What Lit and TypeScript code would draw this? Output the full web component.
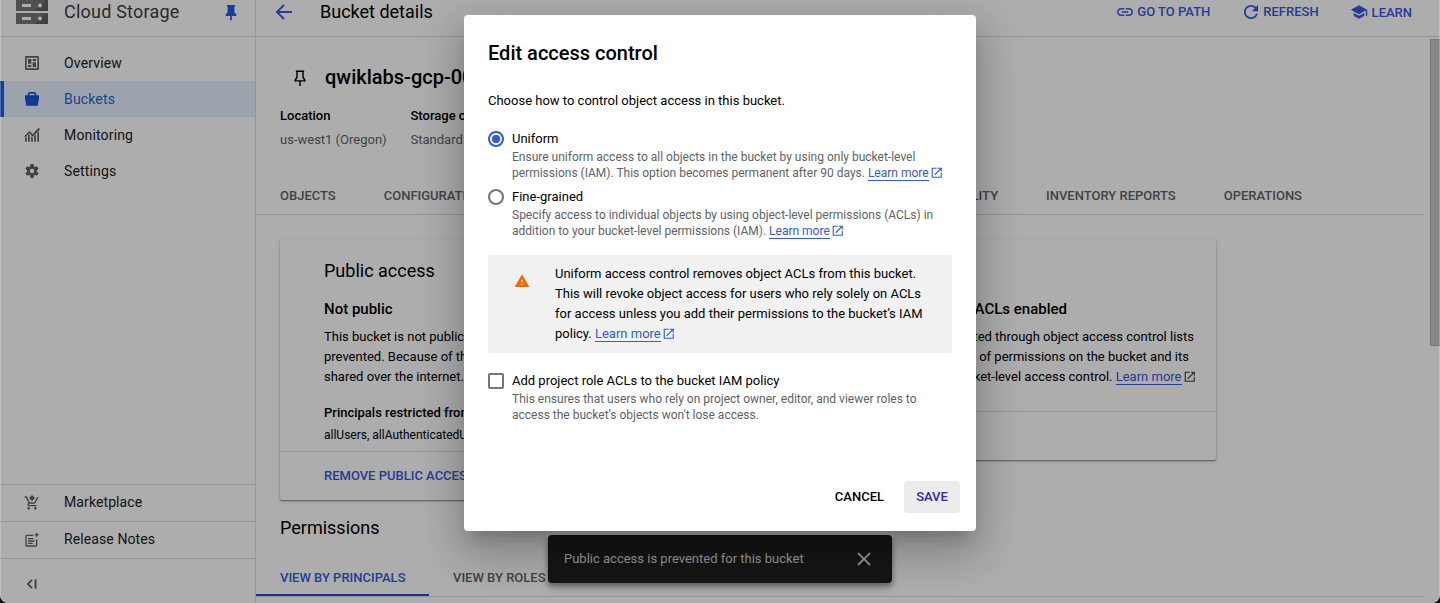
import { LitElement, html, css, svg } from "lit";
import { customElement, property } from "lit/decorators.js";

const icons: Record<string, unknown> = {
  back: svg`<path d="M21.500 10.900H6.300l6.500-6.500L11.200 2.800 2 12l9.200 9.200 1.600-1.600-6.500-6.500h15.200z"/>`,
  pinFilled: svg`<path d="M6.500 2.500h11v2h-1v8l2.600 2v2.700h-6V23h-2.200v-5.800H4.900v-2.700l2.600-2v-8h-1z"/>`,
  pin: svg`<path fill="none" stroke="currentColor" stroke-width="1.900" d="M6.500 3h11M8 3v8l-2.500 4v.8h13V15L16 11V3M12 16v6.500"/>`,
  link: svg`<path transform="translate(-.84 -.84) scale(1.07)" d="M3.9 12c0-1.71 1.39-3.1 3.1-3.1h4V7H7c-2.76 0-5 2.24-5 5s2.24 5 5 5h4v-1.9H7c-1.71 0-3.1-1.39-3.1-3.1zM8 13h8v-2H8v2zm9-6h-4v1.9h4c1.71 0 3.1 1.39 3.1 3.1s-1.39 3.1-3.1 3.1h-4V17h4c2.76 0 5-2.24 5-5s-2.24-5-5-5z"/>`,
  refresh: svg`<path transform="translate(-2 -2) scale(1.17)" d="M17.65 6.35C16.2 4.9 14.21 4 12 4c-4.42 0-7.99 3.58-7.99 8s3.57 8 7.99 8c3.73 0 6.84-2.55 7.73-6h-2.08c-.82 2.33-3.04 4-5.65 4-3.31 0-6-2.69-6-6s2.69-6 6-6c1.66 0 3.14.69 4.22 1.78L13 11h7V4l-2.35 2.35z"/>`,
  learn: svg`<path d="M5 13.18v4L12 21l7-3.82v-4L12 17l-7-3.82zM12 3L1 9l11 6 9-4.91V17h2V9L12 3z"/>`,
  overview: svg`<path fill-rule="evenodd" d="M3.500 1.500h17a2 2 0 0 1 2 2v17a2 2 0 0 1-2 2h-17a2 2 0 0 1-2-2v-17a2 2 0 0 1 2-2zm.5 2.500v16h16V4zM6 6h5v7H6zM13 6h5v3h-5zM13 11h5v7h-5zM6 15h5v3H6z"/>`,
  bucket: svg`<path fill-rule="evenodd" d="M7 1.500h10l2 5h3.500v4L20.500 22h-17L1.500 10.500v-4H5zM8.500 4L7.500 6.500h9L15.500 4z"/>`,
  monitoring: svg`<path d="M1.500 22v-5l2.600-2.500V22zM6 22v-9.500l1.500-1.500 1.100 1V22zM10.700 22v-8l2.600 2v6zM15.200 22v-8.500l2.600-2.500v11zM19.900 22V9l2.600-2.500V22zM1 13l7-7 5 5L22 1l1.500 1.600v1.600L13 14.500l-5-5-7 7z"/>`,
  settings: svg`<path d="M19.400 13a7.500 7.500 0 0 0 0-2l2.600-2-2.500-4.300-3 1.200a7.500 7.500 0 0 0-1.700-1L14.300 1.500H9.700L9.200 4.900a7.500 7.500 0 0 0-1.700 1l-3-1.200L2 9l2.600 2a7.500 7.500 0 0 0 0 2L2 15l2.500 4.300 3-1.200a7.500 7.500 0 0 0 1.700 1l.5 3.400h4.600l.5-3.400a7.500 7.500 0 0 0 1.700-1l3 1.200L22 15zM12 15.300a3.300 3.300 0 1 1 0-6.600 3.300 3.300 0 0 1 0 6.600z"/>`,
  market: svg`<path d="M12 0l4.500 4.500L12 9 7.500 4.500zM7 18c-1.100 0-2 .9-2 2s.9 2 2 2 2-.9 2-2-.9-2-2-2zm10 0c-1.100 0-2 .9-2 2s.9 2 2 2 2-.9 2-2-.9-2-2-2zM8.100 13h7.450c.75 0 1.410-.41 1.750-1.030L21.700 4l-1.750-1-4.400 8H8.530L4.270 2H1v2h2l3.600 7.590-1.350 2.440C4.520 15.370 5.480 17 7 17h12v-2H7l1.100-2z"/>`,
  notes: svg`<path d="M14 4H4a2 2 0 0 0-2 2v14a2 2 0 0 0 2 2h14a2 2 0 0 0 2-2V11h-2v9H4V6h10zM6 9h8v2H6zM6 12.500h10v2H6zM6 16h7v2H6zM19 0l1.200 3L23 4.200l-2.800 1.200L19 8.500l-1.200-3.100L15 4.200 17.800 3z"/>`,
  collapse: svg`<path d="M12.500 5L5.500 12l7 7 1.900-1.900L9.300 12l5.100-5.100zM17.500 5h2.800v14h-2.800z"/>`,
  external: svg`<path d="M19 19H5V5h7V3H3v18h18v-9h-2v7zM14 3v2h3.590l-9.830 9.830 1.410 1.410L19 6.410V10h2V3h-7z"/>`,
  close: svg`<path d="M20 5.600L18.400 4 12 10.400 5.600 4 4 5.600l6.400 6.400L4 18.400 5.600 20l6.400-6.400 6.400 6.400 1.600-1.600-6.400-6.400z"/>`,
  warning: svg`<path d="M1 21h22L12 2 1 21zm12-3h-2v-2h2v2zm0-4h-2v-4h2v4z"/>`,
};

@customElement("ui-icon")
class UiIcon extends LitElement {
  @property() name = "";
  static styles = css`
    :host { display: inline-flex; flex: none; width: 18px; height: 18px; }
    svg { display: block; width: 100%; height: 100%; fill: currentColor; }
  `;
  render() {
    return html`<svg viewBox="0 0 24 24">${icons[this.name]}</svg>`;
  }
}

@customElement("learn-link")
class LearnLink extends LitElement {
  static styles = css`
    :host { color: #3659de; white-space: nowrap; }
    .text { border-bottom: 1px solid currentColor; }
    ui-icon { width: 13.500px; height: 13.500px; margin: 0 0 0 1px; vertical-align: -2px; color: var(--ext, currentColor); }
  `;
  render() {
    return html`<span class="text">Learn more</span><ui-icon name="external"></ui-icon>`;
  }
}

@customElement("app-root")
class AppRoot extends LitElement {
  static styles = css`
    :host {
      display: block; width: 1440px; height: 603px; overflow: hidden;
      background: #0c1014; color: #000;
      font: 400 13px/20px Roboto, sans-serif; letter-spacing: 0;
    }
    * { box-sizing: border-box; }
    .window { position: relative; height: 603px; overflow: hidden; border-radius: 0 0 8px 8px; background: #fff; }
    .page { display: flex; height: 603px; }
    .side { width: 256px; flex: none; border-right: 1px solid #dadce0; display: flex; flex-direction: column; color: #202124; }
    .product { height: 49px; margin-top: -12px; flex: none; display: flex; align-items: center; padding: 0 15px 0 16px; border-bottom: 1px solid #dadce0; }
    .racks { width: 32px; display: grid; gap: 2px; }
    .racks svg { display: block; }
    .product .name { margin-left: 16px; flex: 1; font-size: 18px; letter-spacing: 0.22px; color: #3c4043; }
    .product ui-icon { color: #1a5fe0; width: 18px; height: 18px; }
    .nav { padding-top: 8px; flex: 1; }
    .item { display: flex; align-items: center; height: 36px; padding-left: 24px; font-size: 14px; letter-spacing: 0.16px; }
    .item ui-icon { width: 16px; height: 16px; margin-right: 24px; color: #5f6368; }
    .item.active { background: #e8f0fe; color: #1967d2; border-left: 4px solid #1a5fe0; padding-left: 20px; }
    .item.active ui-icon { color: #1558d6; }
    .foot { border-top: 1px solid #dadce0; height: 37px; padding-bottom: 2px; letter-spacing: 0.1px; }
    .foot ui-icon { margin-top: 2px; }
    .fold { height: 45px; border-top: 1px solid #dadce0; padding: 17px 0 0 23px; color: #5f6368; }
    .fold ui-icon { width: 16px; height: 16px; }
    .main { flex: 1; min-width: 0; display: flex; flex-direction: column; }
    .bar { height: 49px; margin-top: -12px; flex: none; display: flex; align-items: center; padding: 0 28px 0 18px; border-bottom: 1px solid #dadce0; color: #3659de; font-weight: 500; }
    .bar .back { width: 20px; height: 20px; }
    .bar .title { margin-left: 26px; flex: 1; font-size: 18px; font-weight: 400; color: #000; }
    .action { display: flex; align-items: center; gap: 3px; margin-left: 32px; }
    .action.last { padding-top: 1px; margin-left: 31px; gap: 4px; }
    .action.last ui-icon { margin-bottom: 2px; }
    .scroll { display: flex; flex: 1; min-height: 0; }
    .body { width: 1168px; flex: none; white-space: nowrap; overflow: hidden; }
    .thumb { width: 10px; height: 307px; margin: 2px 0 0 6px; background: #c6c6c6; border: 1px solid #b4b4b4; border-right: 0; }
    .head { display: flex; align-items: center; height: 24px; margin: 28px 0 0 35px; font-size: 20px; font-weight: 500; }
    .head ui-icon { margin: 2px 16px 0 0; }
    .facts { display: grid; grid-template-columns: 106.500px auto; column-gap: 24px; row-gap: 4px; margin: 17px 24px 0; }
    .facts b { font-weight: 500; }
    .facts span { color: #5f6368; }
    .tabs { display: flex; font-weight: 500; color: #5f6368; border-bottom: 1px solid #dadce0; }
    .tabs span { padding: 0 24px; }
    .tabs.top { height: 38px; line-height: 37px; margin-top: 27px; padding-right: 98px; }
    .tabs .gap { flex: 1; }
    .cards { display: flex; align-items: flex-start; gap: 24px; padding: 24px 24px 0; }
    .card { width: 456px; border-radius: 2px; box-shadow: 0 1px 3px rgba(0,0,0,.28), 0 1px 1px rgba(0,0,0,.3); }
    .content { padding: 22px 44px 0; height: 212px; overflow: hidden; }
    .content.short { height: 172px; padding: 42px 20px 0; }
    .content h2 { margin: 0; font-size: 18px; line-height: 20px; font-weight: 400; }
    .content h3 { margin: 18px 0 8px; font-size: 15px; line-height: 20px; font-weight: 500; }
    .content h4 { margin: 16px 0 2px; font-size: 13px; line-height: 20px; font-weight: 500; }
    .content .small { font-size: 12px; }
    .right { display: flex; flex-direction: column; align-items: flex-end; --ext: #3c4043; }
    .right .r1 { padding-right: 2px; }
    .right .r2 { padding-right: 7px; }
    .right .h { padding-right: 129px; }
    .cardfoot { height: 49px; border-top: 1px solid #dadce0; padding: 14px 44px; color: #3659de; font-weight: 500; }
    .perm { margin: 18px 24px 0; font-size: 18px; line-height: 20px; }
    .tabs.view { margin-top: 22px; height: 37px; line-height: 36px; }
    .tabs.view span:first-child { padding-right: 23.500px; }
    .tabs .on { color: #3659de; border-bottom: 2px solid #2c4fd8; height: 36px; }
    .snack { position: absolute; left: 548px; top: 535px; width: 344px; height: 48px; border-radius: 4px; background: #202020; color: #dcdcdc; display: flex; align-items: center; justify-content: space-between; padding: 0 18px 0 16px; box-shadow: 0 3px 5px rgba(0,0,0,.3), 0 5px 10px rgba(0,0,0,.2); }
    .snack ui-icon { width: 20px; height: 20px; }
    .shade { position: absolute; inset: 0; background: rgba(0,0,0,.32); border: solid rgba(255,255,255,.25); border-width: 0 1px; display: flex; justify-content: center; align-items: flex-start; padding-top: 15px; }
    .dialog { width: 512px; height: 516px; border-radius: 4px; background: #fff; padding: 26px 24px 0; box-shadow: 0 11px 15px -7px rgba(0,0,0,.2), 0 24px 38px 3px rgba(0,0,0,.14), 0 9px 46px 8px rgba(0,0,0,.12); white-space: nowrap; }
    .dialog h1 { margin: 0 0 26px; font-size: 20px; line-height: 24px; font-weight: 500; }
    .choice { display: flex; gap: 8px; }
    .choice .hint { font-size: 12px; line-height: 16px; color: #5f6368; }
    .choice.a { margin-top: 18px; }
    .choice.b { margin-top: 6px; }
    .choice.c { margin-top: 18px; }
    .radio, .check { width: 16px; height: 16px; flex: none; margin-top: 2px; border: 2px solid #757575; border-radius: 50%; }
    .check { border-radius: 2px; }
    .radio.on { border-color: #3659de; background: radial-gradient(circle, #3659de 3.800px, #fff 4.500px); }
    .warn { margin-top: 16px; height: 98px; background: #f1f1f1; border-radius: 4px; display: flex; padding: 9px 0 0 26px; }
    .warn ui-icon.tri { width: 16px; height: 16px; margin: 9px 25px 0 0; color: #ee6a02; }
    .btns { display: flex; justify-content: flex-end; gap: 8px; margin: 58px -8px 0 0; font-weight: 500; }
    .btn { height: 32px; line-height: 32px; min-width: 56px; text-align: center; padding: 0 12px; border-radius: 4px; }
    .btn.save { background: #ececec; color: #2b27bd; }
  `;

  private nav = [
    ["overview", "Overview"],
    ["bucket", "Buckets"],
    ["monitoring", "Monitoring"],
    ["settings", "Settings"],
  ];

  private rack() {
    return html`<svg width="32" height="11" viewBox="0 0 32 11"><path fill="#757575" d="M0 0h32v11H0z"/><path fill="#616161" d="M30 0h2v11H19z"/><path fill="#fff" d="M6 4h9v3H6z"/><circle cx="24" cy="5.500" r="2" fill="#fff"/></svg>`;
  }

  render() {
    return html`<div class="window">
      <div class="page">
        <nav class="side">
          <div class="product">
            <div class="racks">${this.rack()}${this.rack()}</div>
            <span class="name">Cloud Storage</span><ui-icon name="pinFilled"></ui-icon>
          </div>
          <div class="nav">
            ${this.nav.map(([icon, label]) => html`<div class="item ${label === "Buckets" ? "active" : ""}"><ui-icon name=${icon}></ui-icon>${label}</div>`)}
          </div>
          <div class="item foot"><ui-icon name="market"></ui-icon>Marketplace</div>
          <div class="item foot"><ui-icon name="notes"></ui-icon>Release Notes</div>
          <div class="fold"><ui-icon name="collapse"></ui-icon></div>
        </nav>
        <main class="main">
          <div class="bar">
            <ui-icon class="back" name="back"></ui-icon><span class="title">Bucket details</span>
            <span class="action"><ui-icon name="link"></ui-icon>GO TO PATH</span>
            <span class="action"><ui-icon name="refresh"></ui-icon>REFRESH</span>
            <span class="action last"><ui-icon name="learn"></ui-icon>LEARN</span>
          </div>
          <div class="scroll">
            <div class="body">
              <div class="head"><ui-icon name="pin"></ui-icon>qwiklabs-gcp-00</div>
              <div class="facts"><b>Location</b><b>Storage class</b><span>us-west1 (Oregon)</span><span>Standard</span></div>
              <div class="tabs top">
                <span>OBJECTS</span><span>CONFIGURATION</span><i class="gap"></i>
                <span>OBSERVABILITY</span><span>INVENTORY REPORTS</span><span>OPERATIONS</span>
              </div>
              <div class="cards">
                <section class="card">
                  <div class="content">
                    <h2>Public access</h2>
                    <h3>Not public</h3>
                    <div>This bucket is not public<br />prevented. Because of this<br />shared over the internet.</div>
                    <h4>Principals restricted from</h4>
                    <div class="small">allUsers, allAuthenticatedUsers</div>
                  </div>
                  <div class="cardfoot">REMOVE PUBLIC ACCESS</div>
                </section>
                <section class="card">
                  <div class="content short">
                    <div class="right">
                      <h3 class="h">ACLs enabled</h3>
                      <div class="r1">granted through object access control lists</div>
                      <div class="r2">control of permissions on the bucket and its</div>
                      <div>bucket-level access control. <learn-link></learn-link></div>
                    </div>
                  </div>
                  <div class="cardfoot"></div>
                </section>
              </div>
              <div class="perm">Permissions</div>
              <div class="tabs view"><span class="on">VIEW BY PRINCIPALS</span><span>VIEW BY ROLES</span></div>
            </div>
            <div class="thumb"></div>
          </div>
        </main>
      </div>
      <div class="snack"><span>Public access is prevented for this bucket</span><ui-icon name="close"></ui-icon></div>
      <div class="shade">
        <div class="dialog">
          <h1>Edit access control</h1>
          <div>Choose how to control object access in this bucket.</div>
          <div class="choice a"><span class="radio on"></span><div>Uniform
            <div class="hint">Ensure uniform access to all objects in the bucket by using only bucket-level<br />permissions (IAM). This option becomes permanent after 90 days. <learn-link></learn-link></div></div></div>
          <div class="choice b"><span class="radio"></span><div>Fine-grained
            <div class="hint">Specify access to individual objects by using object-level permissions (ACLs) in<br />addition to your bucket-level permissions (IAM). <learn-link></learn-link></div></div></div>
          <div class="warn"><ui-icon class="tri" name="warning"></ui-icon><div>Uniform access control removes object ACLs from this bucket.<br />This will revoke object access for users who rely solely on ACLs<br />for access unless you add their permissions to the bucket’s IAM<br />policy. <learn-link></learn-link></div></div>
          <div class="choice c"><span class="check"></span><div>Add project role ACLs to the bucket IAM policy
            <div class="hint">This ensures that users who rely on project owner, editor, and viewer roles to<br />access the bucket’s objects won't lose access.</div></div></div>
          <div class="btns"><span class="btn">CANCEL</span><span class="btn save">SAVE</span></div>
        </div>
      </div>
    </div>`;
  }
}
